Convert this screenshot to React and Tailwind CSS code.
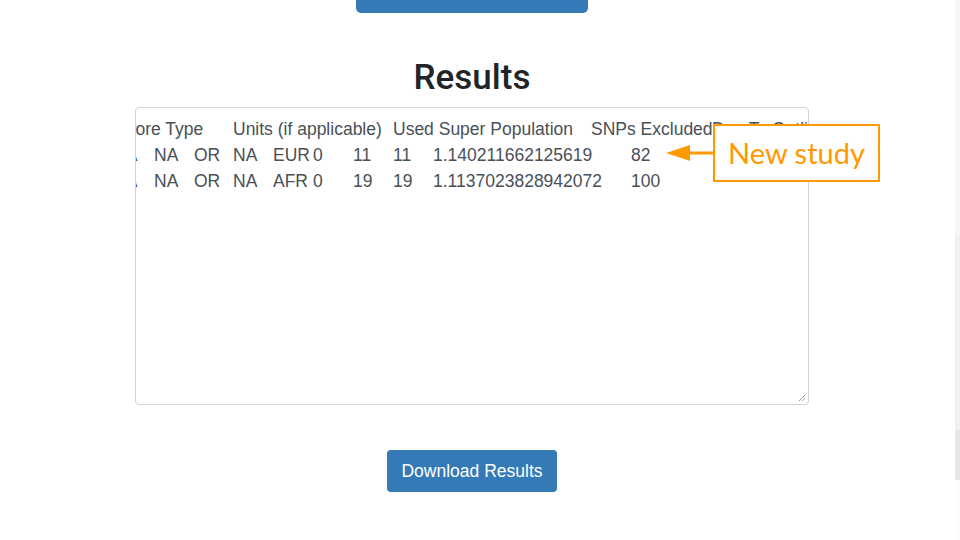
import React from 'react';

const headerCells = [
  ['', 19],
  ['Score Type', 118],
  ['Units (if applicable)', 160],
  ['Used Super Population', 198],
  ['SNPs Excluded', 121],
  ['Due To Outlier', 160],
];

const rows = [
  ['NA', 'NA', 'OR', 'NA', 'EUR', '0', '11', '11', '1.140211662125619', '82'],
  ['NA', 'NA', 'OR', 'NA', 'AFR', '0', '19', '19', '1.1137023828942072', '100'],
];

const rowWidths = [41, 40, 39, 40, 40, 40, 40, 40, 198, 60];

const ResultsBox = () => (
  <div className="relative w-[674px] h-[298px] border border-[#ced4da] rounded-[4px] bg-white overflow-hidden">
    <div className="pt-[8px] -ml-[40px] text-[17.5px] leading-[26px] text-[#495057] whitespace-pre">
      <div className="flex">
        {headerCells.map(([text, w], i) => (
          <span key={i} className="shrink-0" style={{ width: w }}>
            {text}
          </span>
        ))}
      </div>
      {rows.map((row, r) => (
        <div key={r} className="flex">
          <span className="shrink-0 w-[17px]" />
          {row.map((text, i) => (
            <span key={i} className="shrink-0" style={{ width: rowWidths[i] }}>
              {text}
            </span>
          ))}
        </div>
      ))}
    </div>
    {/* resize grip */}
    <svg className="absolute right-[2px] bottom-[2px]" width="9" height="9" viewBox="0 0 9 9">
      <path d="M8 2 L2 8 M8 5 L5 8" stroke="#9a9a9a" strokeWidth="1" />
    </svg>
  </div>
);

const Callout = () => (
  <>
    <svg className="absolute left-[664px] top-[144px]" width="50" height="18" viewBox="0 0 50 18">
      <path d="M2 9 L26 1 L26 17 Z" fill="#ff9900" />
      <rect x="24" y="7.5" width="26" height="3" fill="#ff9900" />
    </svg>
    <div className="absolute left-[713px] top-[124px] w-[167px] h-[58px] border-2 border-[#ff9900] bg-white flex items-center justify-center">
      <span className="text-[29px] leading-none text-[#ff9900] pb-[2px]" style={{ fontFamily: 'Lato, "Noto Sans", sans-serif' }}>
        New study
      </span>
    </div>
  </>
);

export default function App() {
  return (
    <div
      className="relative w-[960px] h-[540px] bg-white flex overflow-hidden"
      style={{ fontFamily: '"Liberation Sans", Arial, sans-serif' }}
    >
      <div className="w-[944px] flex flex-col items-center">
        <div className="w-[232px] h-[13px] bg-[#337ab7] rounded-b-[5px]" />
        <h2
          className="mt-[45px] text-[35px] leading-[40px] font-medium text-[#212529]"
          style={{ fontFamily: 'Roboto, "Liberation Sans", sans-serif' }}
        >
          Results
        </h2>
        <div className="mt-[9px]">
          <ResultsBox />
        </div>
        <button className="mt-[45px] h-[42px] px-[14px] bg-[#337ab7] rounded-[4px] text-white text-[17.5px]">
          Download Results
        </button>
      </div>
      <div className="ml-[11px] w-[5px] flex flex-col">
        <div className="h-[235px] bg-[#f6f6f6]" />
        <div className="h-[195px] bg-[#f1f1f1]" />
        <div className="h-[50px] bg-[#e6e6e6]" />
        <div className="flex-1 bg-[#fcfcfc]" />
      </div>
      <Callout />
    </div>
  );
}
